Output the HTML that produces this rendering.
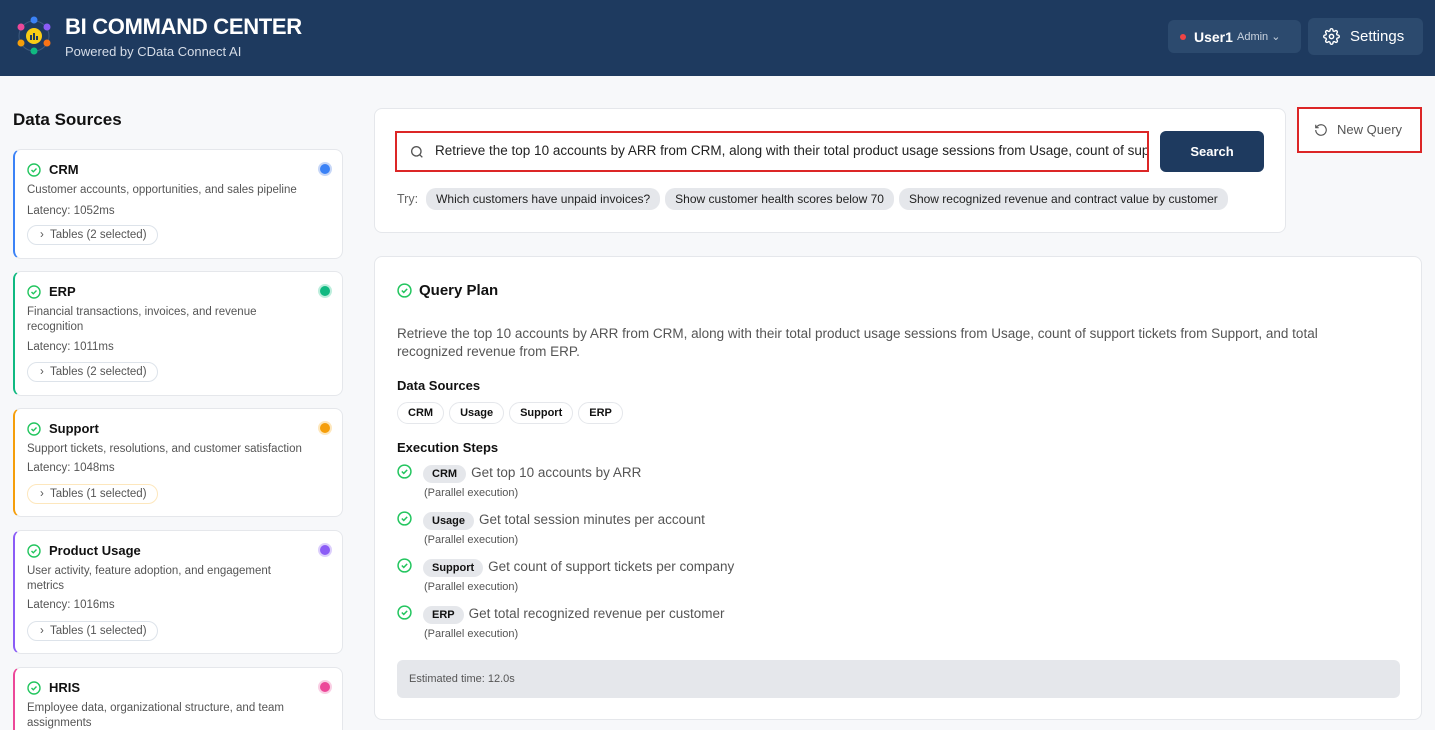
<!DOCTYPE html>
<html><head><meta charset="utf-8"><style>
*{box-sizing:border-box;margin:0;padding:0}
html,body{width:1435px;height:730px;overflow:hidden}
body{background:#f7f8fa;font-family:"Liberation Sans",sans-serif;color:#111;position:relative}
.hdr{position:absolute;left:0;top:0;width:1435px;height:76px;background:#1e3a5f}
.title{position:absolute;left:65px;top:14px;color:#fff;font-weight:bold;font-size:22px;letter-spacing:-0.3px}
.sub{position:absolute;left:65px;top:44px;color:#d6dde8;font-size:13px}
.ubtn{position:absolute;left:1168px;top:20px;width:133px;height:33px;background:#2c4a6e;border-radius:6px;color:#fff;font-size:14px;font-weight:bold}
.sbtn{position:absolute;left:1308px;top:18px;width:115px;height:37px;background:#2c4a6e;border-radius:6px;color:#fff;font-size:15px}
.ds{position:absolute;left:13px;top:110px;font-size:17px;font-weight:bold}
.card{position:absolute;left:13px;width:330px;background:#fff;border:1px solid #e5e7eb;border-radius:8px;border-left:2px solid}
.card .n{position:absolute;left:34px;top:12px;font-size:13px;font-weight:bold}
.card .ck{position:absolute;left:12px;top:13px}
.card .d{position:absolute;left:12px;top:33px;width:285px;font-size:11.5px;color:#555;line-height:15px}
.card .l{position:absolute;left:12px;font-size:11.5px;color:#555}
.card .t{position:absolute;left:12px;height:20px;border:1px solid #dde3ea;border-radius:10px;font-size:11.5px;color:#555;padding:3px 10px 0 12px}
.card .dot{position:absolute;right:10px;top:12px;width:14px;height:14px;border-radius:50%;border:2px solid #c7d7f7}
.box{position:absolute;background:#fff;border:1px solid #e5e7eb;border-radius:8px}
.chip{display:inline-block;background:#e5e7eb;border-radius:10px;font-size:12px;color:#222;padding:4px 10px;margin-right:5px}
.pill{display:inline-block;border:1px solid #e5e7eb;border-radius:11px;font-size:11px;font-weight:bold;padding:4px 10px;margin-right:5px}
.step{position:absolute;left:22px}
.step .b{display:inline-block;background:#e5e7eb;border-radius:10px;font-size:11px;font-weight:bold;padding:3px 9px;margin:0 5px 0 4px}
.step .tx{font-size:13.5px;color:#555}
.step .p{font-size:11px;color:#555;margin-left:27px;margin-top:4px}
</style></head><body>
<div class="hdr">
<svg style="position:absolute;left:14px;top:16px" width="40" height="40" viewBox="0 0 40 40"><circle cx="20" cy="20" r="15" fill="none" stroke="#3d5a7e" stroke-width="1"/><circle cx="20" cy="4" r="3.5" fill="#3b82f6"/><circle cx="33" cy="11" r="3.5" fill="#8b5cf6"/><circle cx="33" cy="27" r="3.5" fill="#f97316"/><circle cx="20" cy="35" r="3.5" fill="#10b981"/><circle cx="7" cy="27" r="3.5" fill="#f59e0b"/><circle cx="7" cy="11" r="3.5" fill="#ec4899"/><circle cx="20" cy="20" r="8" fill="#facc15"/><rect x="16" y="19" width="2" height="5" fill="#1e3a5f"/><rect x="19" y="17" width="2" height="7" fill="#1e3a5f"/><rect x="22" y="20" width="2" height="4" fill="#1e3a5f"/></svg>
<div class="title">BI COMMAND CENTER</div>
<div class="sub">Powered by CData Connect AI</div>
<div class="ubtn"><span style="position:absolute;left:12px;top:14px;width:6px;height:6px;border-radius:50%;background:#ef4444"></span><span style="position:absolute;left:26px;top:9px">User1</span><span style="position:absolute;left:69px;top:10px;font-size:11px;font-weight:normal;color:#c9d3df">Admin ⌄</span></div>
<div class="sbtn"><svg style="position:absolute;left:15px;top:10px" width="17" height="17" viewBox="0 0 24 24" fill="none" stroke="#fff" stroke-width="2"><circle cx="12" cy="12" r="3"/><path d="M19.4 15a1.65 1.65 0 0 0 .33 1.820l.06.06a2 2 0 1 1-2.83 2.83l-.06-.06a1.65 1.65 0 0 0-1.82-.33 1.65 1.65 0 0 0-1 1.51V21a2 2 0 1 1-4 0v-.09A1.65 1.65 0 0 0 9 19.4a1.65 1.65 0 0 0-1.820.33l-.06.06a2 2 0 1 1-2.83-2.830l.06-.06A1.65 1.65 0 0 0 4.6 15a1.65 1.65 0 0 0-1.51-1H3a2 2 0 1 1 0-4h.09A1.65 1.65 0 0 0 4.6 9a1.65 1.65 0 0 0-.33-1.82l-.06-.06a2 2 0 1 1 2.83-2.83l.06.06A1.65 1.65 0 0 0 9 4.6a1.65 1.65 0 0 0 1-1.51V3a2 2 0 1 1 4 0v.09a1.65 1.65 0 0 0 1 1.51 1.65 1.65 0 0 0 1.82-.33l.06-.06a2 2 0 1 1 2.83 2.83l-.06.06A1.65 1.65 0 0 0 19.4 9a1.65 1.65 0 0 0 1.51 1H21a2 2 0 1 1 0 4h-.09a1.65 1.65 0 0 0-1.51 1z"/></svg><span style="position:absolute;left:42px;top:10px">Settings</span></div>
</div>

<div class="ds">Data Sources</div>

<div class="card" style="top:149px;height:110px;border-left-color:#3b82f6"><svg class="ck" width="14" height="14" viewBox="0 0 14 14"><circle cx="7" cy="7" r="6" fill="none" stroke="#22c55e" stroke-width="1.4"/><path d="M4.5 7l1.8 1.8 3.2-3.3" fill="none" stroke="#22c55e" stroke-width="1.4"/></svg><div class="n">CRM</div><div class="dot" style="background:#3b82f6"></div><div class="d">Customer accounts, opportunities, and sales pipeline</div><div class="l" style="top:55px">Latency: 1052ms</div><div class="t" style="top:75px">›&nbsp; Tables (2 selected)</div></div>

<div class="card" style="top:271px;height:125px;border-left-color:#10b981"><svg class="ck" width="14" height="14" viewBox="0 0 14 14"><circle cx="7" cy="7" r="6" fill="none" stroke="#22c55e" stroke-width="1.4"/><path d="M4.5 7l1.8 1.8 3.2-3.3" fill="none" stroke="#22c55e" stroke-width="1.4"/></svg><div class="n">ERP</div><div class="dot" style="background:#10b981;border-color:#bdeedd"></div><div class="d">Financial transactions, invoices, and revenue<br>recognition</div><div class="l" style="top:69px">Latency: 1011ms</div><div class="t" style="top:90px">›&nbsp; Tables (2 selected)</div></div>

<div class="card" style="top:408px;height:109px;border-left-color:#f59e0b"><svg class="ck" width="14" height="14" viewBox="0 0 14 14"><circle cx="7" cy="7" r="6" fill="none" stroke="#22c55e" stroke-width="1.4"/><path d="M4.5 7l1.8 1.8 3.2-3.3" fill="none" stroke="#22c55e" stroke-width="1.4"/></svg><div class="n">Support</div><div class="dot" style="background:#f59e0b;border-color:#fde7bd"></div><div class="d">Support tickets, resolutions, and customer satisfaction</div><div class="l" style="top:53px">Latency: 1048ms</div><div class="t" style="top:75px;border-color:#fde7bd">›&nbsp; Tables (1 selected)</div></div>

<div class="card" style="top:530px;height:124px;border-left-color:#8b5cf6"><svg class="ck" width="14" height="14" viewBox="0 0 14 14"><circle cx="7" cy="7" r="6" fill="none" stroke="#22c55e" stroke-width="1.4"/><path d="M4.5 7l1.8 1.8 3.2-3.3" fill="none" stroke="#22c55e" stroke-width="1.4"/></svg><div class="n">Product Usage</div><div class="dot" style="background:#8b5cf6;border-color:#dccffc"></div><div class="d">User activity, feature adoption, and engagement<br>metrics</div><div class="l" style="top:68px">Latency: 1016ms</div><div class="t" style="top:90px">›&nbsp; Tables (1 selected)</div></div>

<div class="card" style="top:667px;height:90px;border-left-color:#ec4899"><svg class="ck" width="14" height="14" viewBox="0 0 14 14"><circle cx="7" cy="7" r="6" fill="none" stroke="#22c55e" stroke-width="1.4"/><path d="M4.5 7l1.8 1.8 3.2-3.3" fill="none" stroke="#22c55e" stroke-width="1.4"/></svg><div class="n">HRIS</div><div class="dot" style="background:#ec4899;border-color:#f9cfe4"></div><div class="d">Employee data, organizational structure, and team assignments</div></div>

<div class="box" style="left:374px;top:108px;width:912px;height:125px">
<div style="position:absolute;left:20px;top:22px;width:754px;height:41px;border:2px solid #dc2626;overflow:hidden;white-space:nowrap;font-size:13.5px;color:#222;padding:10px 0 0 38px"><svg style="position:absolute;left:12px;top:11px" width="16" height="16" viewBox="0 0 24 24" fill="none" stroke="#555" stroke-width="2"><circle cx="11" cy="11" r="7"/><path d="M20 20l-4-4"/></svg>Retrieve the top 10 accounts by ARR from CRM, along with their total product usage sessions from Usage, count of support tickets</div>
<div style="position:absolute;left:785px;top:22px;width:104px;height:41px;background:#1e3a5f;border-radius:6px;color:#fff;font-weight:bold;font-size:13px;text-align:center;line-height:41px">Search</div>
<div style="position:absolute;left:22px;top:79px;font-size:12.5px;color:#666;white-space:nowrap"><span style="margin-right:8px">Try:</span><span class="chip">Which customers have unpaid invoices?</span><span class="chip">Show customer health scores below 70</span><span class="chip">Show recognized revenue and contract value by customer</span></div>
</div>

<div style="position:absolute;left:1297px;top:107px;width:125px;height:46px;border:2px solid #dc2626;background:#fff;font-size:13px;color:#555"><svg style="position:absolute;left:15px;top:14px" width="14" height="14" viewBox="0 0 24 24" fill="none" stroke="#555" stroke-width="2"><path d="M3 12a9 9 0 1 0 3-6.7L3 8"/><path d="M3 3v5h5"/></svg><span style="position:absolute;left:38px;top:13px">New Query</span></div>

<div class="box" style="left:374px;top:256px;width:1048px;height:464px">
<svg style="position:absolute;left:22px;top:26px" width="15" height="15" viewBox="0 0 14 14"><circle cx="7" cy="7" r="6" fill="none" stroke="#22c55e" stroke-width="1.4"/><path d="M4.5 7l1.8 1.8 3.2-3.3" fill="none" stroke="#22c55e" stroke-width="1.4"/></svg>
<div style="position:absolute;left:44px;top:25px;font-size:15px;font-weight:bold">Query Plan</div>
<div style="position:absolute;left:22px;top:68px;width:990px;font-size:13.5px;color:#555;line-height:18px">Retrieve the top 10 accounts by ARR from CRM, along with their total product usage sessions from Usage, count of support tickets from Support, and total<br>recognized revenue from ERP.</div>
<div style="position:absolute;left:22px;top:121px;font-size:13px;font-weight:bold">Data Sources</div>
<div style="position:absolute;left:22px;top:145px"><span class="pill">CRM</span><span class="pill">Usage</span><span class="pill">Support</span><span class="pill">ERP</span></div>
<div style="position:absolute;left:22px;top:183px;font-size:13px;font-weight:bold">Execution Steps</div>
<div class="step" style="top:207px"><svg width="15" height="15" viewBox="0 0 14 14" style="vertical-align:-2px"><circle cx="7" cy="7" r="6" fill="none" stroke="#22c55e" stroke-width="1.4"/><path d="M4.5 7l1.8 1.8 3.2-3.3" fill="none" stroke="#22c55e" stroke-width="1.4"/></svg><span class="b" style="margin-left:11px">CRM</span><span class="tx">Get top 10 accounts by ARR</span><div class="p">(Parallel execution)</div></div>
<div class="step" style="top:254px"><svg width="15" height="15" viewBox="0 0 14 14" style="vertical-align:-2px"><circle cx="7" cy="7" r="6" fill="none" stroke="#22c55e" stroke-width="1.4"/><path d="M4.5 7l1.8 1.8 3.2-3.3" fill="none" stroke="#22c55e" stroke-width="1.4"/></svg><span class="b" style="margin-left:11px">Usage</span><span class="tx">Get total session minutes per account</span><div class="p">(Parallel execution)</div></div>
<div class="step" style="top:301px"><svg width="15" height="15" viewBox="0 0 14 14" style="vertical-align:-2px"><circle cx="7" cy="7" r="6" fill="none" stroke="#22c55e" stroke-width="1.4"/><path d="M4.5 7l1.8 1.8 3.2-3.3" fill="none" stroke="#22c55e" stroke-width="1.4"/></svg><span class="b" style="margin-left:11px">Support</span><span class="tx">Get count of support tickets per company</span><div class="p">(Parallel execution)</div></div>
<div class="step" style="top:348px"><svg width="15" height="15" viewBox="0 0 14 14" style="vertical-align:-2px"><circle cx="7" cy="7" r="6" fill="none" stroke="#22c55e" stroke-width="1.4"/><path d="M4.5 7l1.8 1.8 3.2-3.3" fill="none" stroke="#22c55e" stroke-width="1.4"/></svg><span class="b" style="margin-left:11px">ERP</span><span class="tx">Get total recognized revenue per customer</span><div class="p">(Parallel execution)</div></div>
<div style="position:absolute;left:22px;top:403px;width:1003px;height:38px;background:#e5e7eb;border-radius:6px;font-size:11px;color:#555;padding:13px 0 0 12px">Estimated time: 12.0s</div>
</div>
</body></html>
